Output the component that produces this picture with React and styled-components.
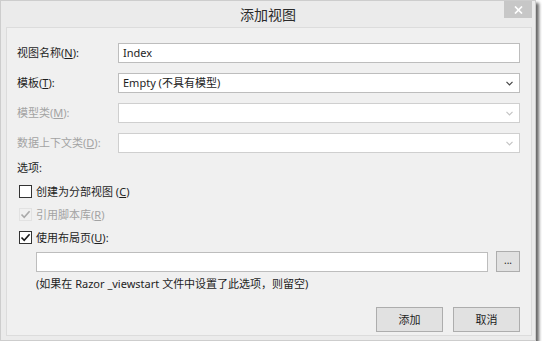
import React from 'react'
import styled, { createGlobalStyle } from 'styled-components'

const GlobalStyle = createGlobalStyle`
  body {
    margin: 0;
    background: #ffffff;
    font-family: "Noto Sans", "Noto Sans CJK SC", sans-serif;
    font-size: 11px;
    color: #1e1e1e;
  }
`;

const Chevron = ({ disabled }) => (
  <svg width="7" height="5" viewBox="0 0 7 5">
    <path d="M0.5 0.8 L3.5 3.8 L6.5 0.8" fill="none" stroke={disabled ? '#c4c4c4' : '#444'} strokeWidth="1.2" />
  </svg>
);

const Check = ({ disabled }) => (
  <svg width="11" height="11" viewBox="0 0 11 11">
    <path d="M1.5 5.5 L4.2 8.3 L9.6 2.2" fill="none" stroke={disabled ? '#a9a9a9' : '#1a1a1a'} strokeWidth="1.6" />
  </svg>
);

const App = () => {
  return (
    <>
      <GlobalStyle />
      <Window>
        <TitleBar>
          <Title>添加视图</Title>
          <CloseBtn>
            <svg width="9" height="8" viewBox="0 0 9 8">
              <path d="M1 0.5 L8 7.5 M8 0.5 L1 7.5" stroke="#fff" strokeWidth="1.7" />
            </svg>
          </CloseBtn>
        </TitleBar>
        <Client>
          <FormGrid>
            <Label>视图名称(<u>N</u>):</Label>
            <TextBox>Index</TextBox>
            <Label>模板(<u>T</u>):</Label>
            <TextBox>
              <span>Empty (不具有模型)</span>
              <Chevron />
            </TextBox>
            <Label disabled>模型类(<u>M</u>):</Label>
            <TextBox disabled>
              <span />
              <Chevron disabled />
            </TextBox>
            <Label disabled>数据上下文类(<u>D</u>):</Label>
            <TextBox disabled>
              <span />
              <Chevron disabled />
            </TextBox>
          </FormGrid>

          <SectionTitle>选项:</SectionTitle>
          <CheckList>
            <CheckRow>
              <Box />
              <span>创建为分部视图 (<u>C</u>)</span>
            </CheckRow>
            <CheckRow disabled>
              <Box disabled><Check disabled /></Box>
              <span>引用脚本库(<u>R</u>)</span>
            </CheckRow>
            <CheckRow>
              <Box><Check /></Box>
              <span>使用布局页(<u>U</u>):</span>
            </CheckRow>
          </CheckList>

          <LayoutRow>
            <TextBox grow />
            <BrowseBtn>...</BrowseBtn>
          </LayoutRow>
          <Hint>(如果在 Razor _viewstart 文件中设置了此选项，则留空)</Hint>

          <Footer>
            <Button>添加</Button>
            <Button>取消</Button>
          </Footer>
        </Client>
      </Window>
    </>
  );
};

const Window = styled.div`
  width: 536px;
  height: 341px;
  box-sizing: border-box;
  border: 1px solid #cdcdcd;
  background: #ebebeb;
  box-shadow: 3px 3px 3px rgba(0, 0, 0, 0.6);
  display: flex;
  flex-direction: column;
`;
const TitleBar = styled.div`
  height: 26px;
  display: grid;
  grid-template-columns: 1fr auto 1fr;
`;
const Title = styled.div`
  grid-column: 2;
  align-self: center;
  font-family: "Noto Sans CJK SC", sans-serif;
  font-size: 14px;
  line-height: 26px;
  color: #2b2b2b;
`;
const CloseBtn = styled.div`
  grid-column: 3;
  justify-self: end;
  align-self: start;
  width: 28px;
  height: 17px;
  margin-right: 3px;
  background: #c7c7c7;
  display: flex;
  align-items: center;
  justify-content: center;
`;
const Client = styled.div`
  flex: 1;
  margin: 0 3px 4px 5px;
  border: 1px solid #dcdcdc;
  background: #f0f0f0;
  padding: 15px 11px 0 10px;
  display: flex;
  flex-direction: column;
`;
const FormGrid = styled.div`
  display: grid;
  grid-template-columns: 101px 1fr;
  grid-auto-rows: 20px;
  row-gap: 10px;
  align-items: center;
`;
const Label = styled.div`
  line-height: 16px;
  color: ${p => (p.disabled ? '#a3a3a3' : '#1e1e1e')};
  white-space: nowrap;
`;
const TextBox = styled.div`
  height: 20px;
  box-sizing: border-box;
  border: 1px solid ${p => (p.disabled ? '#cfcfcf' : '#bdbdbd')};
  background: #ffffff;
  padding: 0 6px 0 4px;
  display: flex;
  align-items: center;
  justify-content: space-between;
  line-height: 16px;
  color: #1e1e1e;
  ${p => p.grow && 'flex: 1;'}
`;
const SectionTitle = styled.div`
  margin-top: 7px;
  line-height: 16px;
`;
const CheckList = styled.div`
  margin-top: 4px;
  display: flex;
  flex-direction: column;
`;
const CheckRow = styled.div`
  height: 23px;
  display: flex;
  align-items: center;
  gap: 4px;
  padding-left: 2px;
  line-height: 16px;
  color: ${p => (p.disabled ? '#a3a3a3' : '#1e1e1e')};
`;
const Box = styled.div`
  width: 13px;
  height: 13px;
  box-sizing: border-box;
  border: 1px solid ${p => (p.disabled ? '#e2e2e2' : '#333333')};
  background: ${p => (p.disabled ? '#f0f0f0' : '#ffffff')};
  display: flex;
  align-items: center;
  justify-content: center;
`;
const LayoutRow = styled.div`
  margin: 2px 0 0 19px;
  display: flex;
  align-items: center;
  gap: 8px;
`;
const BrowseBtn = styled.div`
  width: 24px;
  height: 21px;
  box-sizing: border-box;
  border: 1px solid #adadad;
  background: #e1e1e1;
  display: flex;
  align-items: center;
  justify-content: center;
  font-size: 10px;
  line-height: 10px;
  padding-bottom: 3px;
`;
const Hint = styled.div`
  margin: 4px 0 0 19px;
  line-height: 16px;
`;
const Footer = styled.div`
  margin-top: 15px;
  display: flex;
  justify-content: flex-end;
  gap: 10px;
`;
const Button = styled.div`
  width: 67px;
  height: 25px;
  box-sizing: border-box;
  border: 1px solid #adadad;
  background: #e1e1e1;
  display: flex;
  align-items: center;
  justify-content: center;
  line-height: 16px;
`;

export default App
